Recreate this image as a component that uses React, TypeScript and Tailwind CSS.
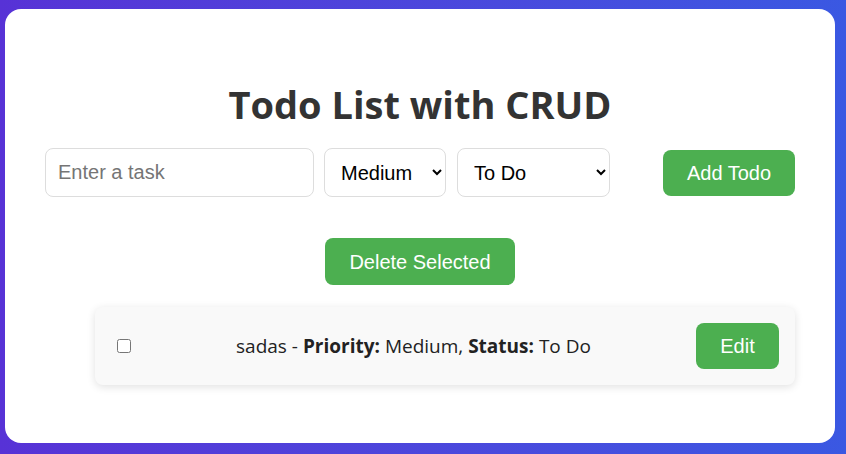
import React, { useState } from 'react';

type Todo = { id: number; text: string; priority: string; status: string; done: boolean };

const uiFont = "font-['Segoe_UI','Open_Sans','Noto_Sans',sans-serif]";
const arial = "font-['Liberation_Sans',Arial,sans-serif]";

export default function App() {
  const [todos, setTodos] = useState<Todo[]>([
    { id: 1, text: 'sadas', priority: 'Medium', status: 'To Do', done: false },
  ]);
  const [task, setTask] = useState('');
  const [priority, setPriority] = useState('Medium');
  const [status, setStatus] = useState('To Do');

  const addTodo = () => {
    if (!task.trim()) return;
    setTodos([...todos, { id: Date.now(), text: task, priority, status, done: false }]);
    setTask('');
  };

  const toggle = (id: number) =>
    setTodos(todos.map((t) => (t.id === id ? { ...t, done: !t.done } : t)));

  return (
    <div className="min-h-screen w-full bg-gradient-to-r from-[#5732d6] to-[#3a58e2] pt-[9px] pl-[5px] pr-[11px] pb-[11px]">
      <div className="h-[434px] w-[830px] rounded-[16px] bg-white px-10 pt-[67px]">
        <h1 className={clsx(uiFont, 'text-center text-[38px] font-bold leading-[56px] text-[#333]')}>
          Todo List with CRUD
        </h1>

        <div className={clsx(arial, 'mt-[16px] flex items-center')}>
          <input
            value={task}
            onChange={(e) => setTask(e.target.value)}
            placeholder="Enter a task"
            className="h-[49px] w-[269px] rounded-[8px] border border-[#ddd] px-3 text-[20px] text-black outline-none placeholder:text-[#757575]"
          />
          <select
            value={priority}
            onChange={(e) => setPriority(e.target.value)}
            className="ml-[10px] h-[49px] w-[122px] rounded-[8px] border border-[#ddd] bg-white px-3 text-[20px] text-black appearance-auto"
          >
            <option>Low</option>
            <option>Medium</option>
            <option>High</option>
          </select>
          <select
            value={status}
            onChange={(e) => setStatus(e.target.value)}
            className="ml-[11px] h-[49px] w-[153px] rounded-[8px] border border-[#ddd] bg-white px-3 text-[20px] text-black appearance-auto"
          >
            <option>To Do</option>
            <option>In Progress</option>
            <option>Done</option>
          </select>
          <button
            onClick={addTodo}
            className="ml-auto h-[46px] w-[132px] rounded-[8px] bg-[#4caf50] text-[20px] text-white"
          >
            Add Todo
          </button>
        </div>

        <div className="mt-[41px] flex justify-center">
          <button
            onClick={() => setTodos(todos.filter((t) => !t.done))}
            className={clsx(arial, 'h-[47px] w-[190px] rounded-[8px] bg-[#4caf50] text-[20px] text-white')}
          >
            Delete Selected
          </button>
        </div>

        <ul className="mt-[22px] flex flex-col gap-3 pl-[50px]">
          {todos.map((t) => (
            <li
              key={t.id}
              className="flex h-[78px] w-[700px] items-center rounded-[8px] bg-[#f9f9f9] pl-[22px] pr-4 shadow-[0_2px_8px_rgba(0,0,0,0.12)]"
            >
              <input
                type="checkbox"
                checked={t.done}
                onChange={() => toggle(t.id)}
                className="m-0 h-[14px] w-[14px]"
              />
              <span className={clsx(uiFont, 'flex-1 text-center text-[19px] text-[#222]')}>
                {t.text} - <strong>Priority:</strong> {t.priority}, <strong>Status:</strong> {t.status}
              </span>
              <button className={clsx(arial, 'h-[46px] w-[83px] rounded-[8px] bg-[#4caf50] text-[20px] text-white')}>
                Edit
              </button>
            </li>
          ))}
        </ul>
      </div>
    </div>
  );
}

function clsx(...c: string[]) {
  return c.join(' ');
}
